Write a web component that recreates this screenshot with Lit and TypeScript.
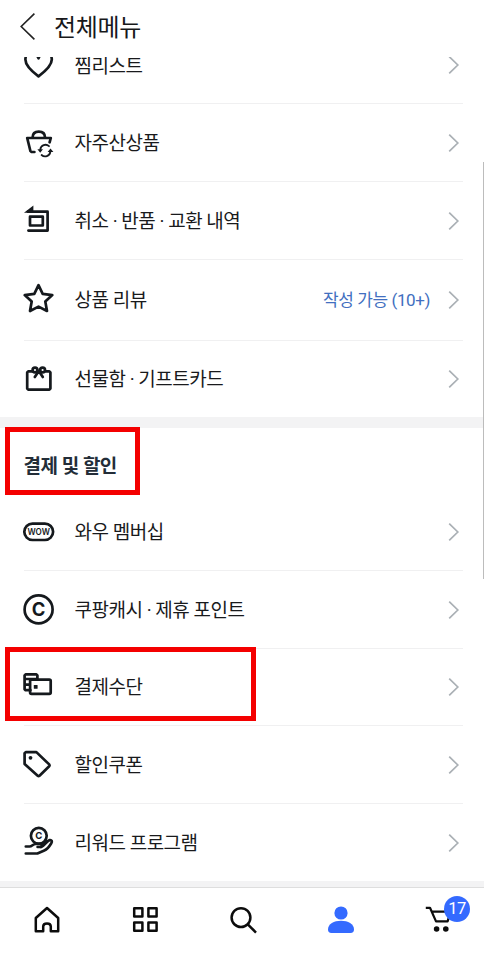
import { LitElement, html, css, svg, nothing, type TemplateResult } from "lit";
import { customElement, property } from "lit/decorators.js";

const icons: Record<string, TemplateResult> = {
  heart: svg`<path d="M18.5 14.3C17 10.5 13.5 9 11 9C7.5 9 5.4 12 5.4 15.5C5.4 22 12 27.5 18.5 32.3C25 27.5 31.8 22 31.8 15.5C31.8 12 29.5 9 26 9C23.5 9 20 10.5 18.5 14.3Z"/>`,
  bag: svg`<path d="M12.6 15.5C12.6 11.5 15 9.6 18.8 9.6S25 11.5 25 15.5"/><path d="M14.4 30H11.6L10.4 29L7.2 16H30.8L29.6 20.3"/>
    <g stroke-width="1.8"><path d="M20.3 27.4A5.2 5.2 0 0 1 29 24.2M30.3 30A5.2 5.2 0 0 1 21.6 33"/></g>
    <path class="fill" d="M17.4 27.2H23L20.2 30.8ZM27.6 30H33.4L30.5 26.4Z"/>`,
  returns: svg`<path class="fill" d="M4 12.8L13.4 5.6V12.8Z"/><path d="M8 11.7H27.6V30.6H8.4"/><path d="M10 16.7H22.8V25.5H10Z"/>`,
  star: svg`<path d="M18.5 7.2L22.7 15.8L32.3 17.1L25.3 23.6L27 33L18.5 28.6L10 33L11.7 23.6L4.7 17.1L14.3 15.8Z"/>`,
  gift: svg`<path d="M12 12.4H8.2L7.2 13.4V29.6L8.2 30.6H29.4L30.4 29.6V13.4L29.4 12.4H26"/><circle cx="15" cy="11" r="2.4"/><circle cx="22.6" cy="11" r="2.4"/><path d="M18.8 12L14.8 18M18.8 12L22.8 18"/>`,
  wow: svg`<rect x="4.3" y="12.6" width="28.8" height="16.4" rx="8.2"/><text x="18.7" y="24" font-size="8.8" textLength="22.4" lengthAdjust="spacingAndGlyphs" font-weight="600">WOW</text>`,
  cash: svg`<circle cx="18.6" cy="20.4" r="14"/><text x="18.5" y="27" font-size="18.4" font-weight="700">C</text>`,
  cards: svg`<path d="M10.4 23.2H5.6L4.6 22.2V8.4L5.6 7.4H16.4L17.4 8.4V12M5 12H16M5 17.6H9.4"/><rect x="10.1" y="12.6" width="20.6" height="14.2" rx="1.4"/><rect class="fill" x="13.8" y="18" width="3.8" height="3.8" rx=".6"/>`,
  tag: svg`<path d="M5.8 8.1H16.4L29.2 20.4Q29.9 21.4 29.2 22.2L19.5 31.8Q18.6 32.6 17.7 31.8L4.6 20V9.3Z"/><circle class="fill" cx="10.5" cy="13.8" r="1.9"/>`,
  reward: svg`<circle cx="18.8" cy="13.8" r="7.9"/><text x="18.7" y="17.4" font-size="9.6" font-weight="700">C</text>
    <path d="M5.8 24.5H9.6C12 24.5 13 22 15.4 22H20.2C22.4 22 22.4 24.8 20.2 25H17.6"/><path d="M20.8 25C25.2 24 26.6 18.8 29.6 18.1C31.8 17.7 32.4 19.6 31.3 21.3C29.2 24.8 27.7 27.2 24.3 28.6L17.4 31.5H5.8"/><path d="M23 22L26 18.8"/>`,
};

@customElement("menu-row")
class MenuRow extends LitElement {
  @property() icon = "";
  @property() label = "";
  @property() note = "";

  static styles = css`
    :host { display: block; height: 78px; box-sizing: border-box; padding: 0 21px 0 20px; }
    .row { display: flex; height: 100%; margin-left: 4px; box-sizing: border-box; border-bottom: 1px solid #f0f0f1; align-items: center; }
    :host([last]) .row { border-bottom: 0; }
    .icon { width: 40px; height: 42px; margin: 18px 11px 0 -4px; align-self: flex-start; flex: none; fill: none; stroke: #15191d; stroke-width: 2.7; stroke-linejoin: round; stroke-linecap: round; overflow: visible; }
    .icon .fill { fill: #15191d; stroke: none; }
    .icon text { fill: #15191d; stroke: none; text-anchor: middle; font-family: Inter, sans-serif; }
    .label { flex: 1; margin-left: 3.5px; padding-top: 2px; font-size: 19px; line-height: 16px; letter-spacing: -0.5px; white-space: nowrap; color: #191a1c; }
    :host([first]) .label { padding-top: 4px; }
    .note { font-size: 17px; line-height: 16px; letter-spacing: -0.4px; color: #426fc0; white-space: nowrap; margin-right: 18px; }
    .arrow { width: 12px; height: 20px; fill: none; stroke: #aab0b5; stroke-width: 1.7; margin-right: 3px; }
  `;

  render() {
    return html`<div class="row">
      <svg class="icon" viewBox="0 0 40 42">${icons[this.icon]}</svg>
      <span class="label">${this.label}</span>
      ${this.note ? html`<span class="note">${this.note}</span>` : nothing}
      <svg class="arrow" viewBox="0 0 12 20"><path d="M1.2 1.6L9.8 10L1.2 18.4"/></svg>
    </div>`;
  }
}

@customElement("app-root")
class AppRoot extends LitElement {
  static styles = css`
    :host { display: flex; flex-direction: column; position: relative; width: 484px; height: 954px; overflow: hidden; background: #fff; font-family: Roboto, "Noto Sans CJK KR", sans-serif; }
    .header { height: 57px; flex: none; display: flex; align-items: flex-start; background: #fff; }
    .back { width: 16px; height: 28px; margin: 13px 18px 0 20px; fill: none; stroke: #222; stroke-width: 1.6; }
    .title { margin: 10px 0 0; font-size: 24px; line-height: 36px; font-weight: 400; letter-spacing: -0.3px; color: #17181a; }
    .list { flex: none; height: 830px; overflow: hidden; display: flex; flex-direction: column; }
    .list > * { flex: none; }
    .first { margin-top: -31px; }
    .review { height: 81px; }
    .gifts { height: 76px; }
    .short { height: 77px; }
    .band { height: 11px; background: #f3f3f4; }
    .section { position: relative; height: 65px; box-sizing: border-box; padding: 25px 0 0 23.5px; }
    .section-title { margin: 0; font-size: 19px; line-height: 28px; font-weight: 700; letter-spacing: -0.5px; color: #232d38; }
    .marked { position: relative; }
    .frame { position: absolute; box-sizing: border-box; border: 5px solid #f40000; }
    .frame-section { left: 5px; top: -1px; width: 135px; height: 68px; }
    .frame-payment { left: 5px; top: -2px; width: 251px; height: 74px; }
    .nav { flex: 1; box-sizing: border-box; border-top: 1px solid #dedede; display: flex; justify-content: space-between; align-items: flex-start; padding: 12px 25px 0 27px; background: #fff; }
    .item { position: relative; width: 40px; height: 40px; }
    .nav-icon { width: 40px; height: 40px; fill: none; stroke: #0c0c0c; stroke-width: 2.5; stroke-linejoin: round; overflow: visible; }
    .solid { fill: #0c0c0c; stroke: none; }
    .active { fill: #346aff; stroke: none; }
    .badge { position: absolute; left: 25px; top: -4px; width: 26px; height: 26px; border-radius: 50%; background: #346aff; color: #fff; text-align: center; font: 16.5px/26px Roboto, sans-serif; letter-spacing: -0.6px; }
    .scroll { position: absolute; right: 0; top: 162px; width: 1px; height: 417px; background: #bcbcbc; }
  `;

  render() {
    return html`
      <header class="header">
        <svg class="back" viewBox="0 0 16 28"><path d="M14.4 .6L1.2 13.5L14.4 26.4"/></svg>
        <h1 class="title">전체메뉴</h1>
      </header>
      <main class="list">
        <menu-row class="first" first icon="heart" label="찜리스트"></menu-row>
        <menu-row icon="bag" label="자주산상품"></menu-row>
        <menu-row icon="returns" label="취소 · 반품 · 교환 내역"></menu-row>
        <menu-row class="review" icon="star" label="상품 리뷰" note="작성 가능 (10+)"></menu-row>
        <menu-row class="gifts" last icon="gift" label="선물함 · 기프트카드"></menu-row>
        <div class="band"></div>
        <div class="section">
          <h2 class="section-title">결제 및 할인</h2>
          <div class="frame frame-section"></div>
        </div>
        <menu-row icon="wow" label="와우 멤버십"></menu-row>
        <menu-row icon="cash" label="쿠팡캐시 · 제휴 포인트"></menu-row>
        <div class="marked">
          <menu-row class="short" icon="cards" label="결제수단"></menu-row>
          <div class="frame frame-payment"></div>
        </div>
        <menu-row icon="tag" label="할인쿠폰"></menu-row>
        <menu-row class="short" last icon="reward" label="리워드 프로그램"></menu-row>
        <div class="band"></div>
      </main>
      <nav class="nav">
        <div class="item"><svg class="nav-icon" viewBox="0 0 40 40"><path d="M20 8L31.2 18V31.2H23.8V26.4Q23.8 23.4 20 23.4T16.2 26.4V31.2H8.8V18Z"/></svg></div>
        <div class="item"><svg class="nav-icon" viewBox="0 0 40 40"><path d="M9.2 8.2h8.2v8.4H9.2ZM23.4 8.2h8.2v8.4H23.4ZM9.2 22.4h8.2v8.4H9.2ZM23.4 22.4h8.2v8.4H23.4Z"/></svg></div>
        <div class="item"><svg class="nav-icon" viewBox="0 0 40 40"><circle cx="18" cy="17.6" r="9.4"/><path d="M24.8 24.4L33 32.6"/></svg></div>
        <div class="item"><svg class="nav-icon" viewBox="0 0 40 40"><g class="active"><circle cx="20" cy="13" r="6.6"/><path d="M7 29.6C7 23.6 13 20.8 20 20.8S33 23.6 33 29.6Q33 33 29.6 33H10.4Q7 33 7 29.6Z"/></g></svg></div>
        <div class="item"><svg class="nav-icon" viewBox="0 0 40 40"><path d="M6.8 7.8H11L17 21.4H28.6L31.6 11.6H13" stroke-width="2.2"/><g class="solid"><circle cx="17.6" cy="29" r="2.8"/><circle cx="26.8" cy="29" r="2.8"/></g></svg><span class="badge">17</span></div>
      </nav>
      <div class="scroll"></div>
    `;
  }
}
